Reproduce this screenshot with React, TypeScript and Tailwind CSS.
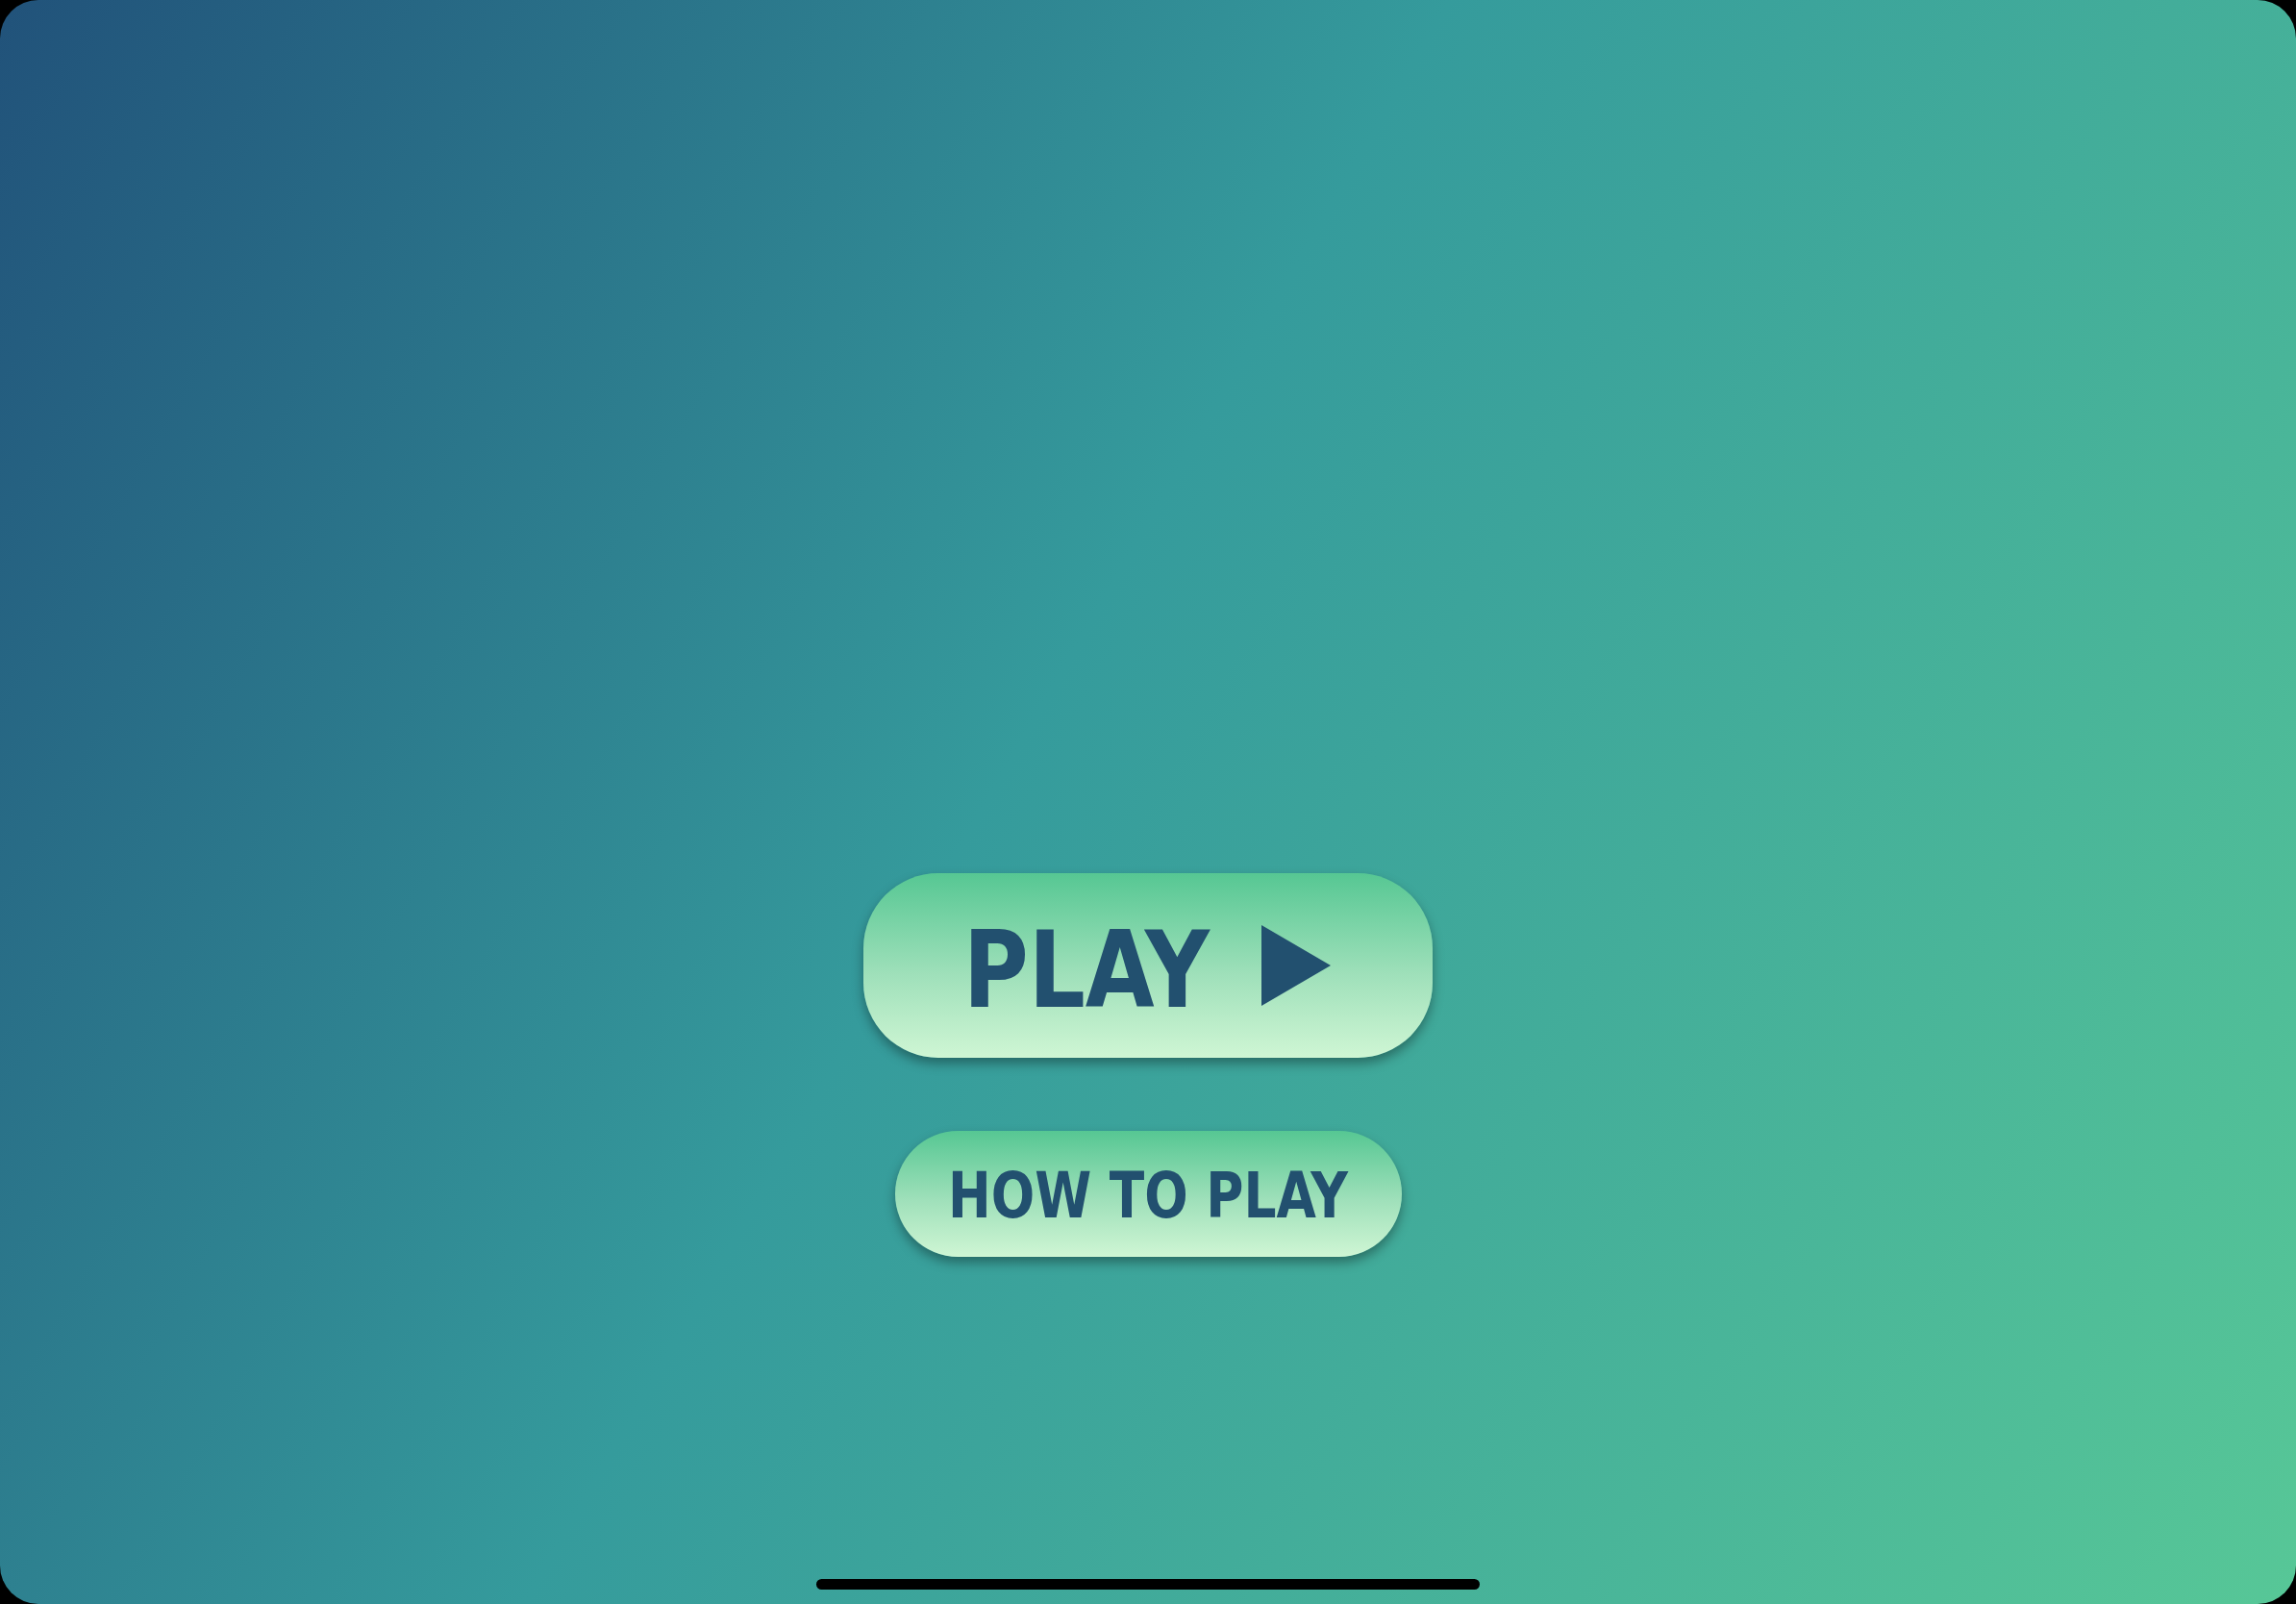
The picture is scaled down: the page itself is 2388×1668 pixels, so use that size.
import React from 'react';

function PlayIcon() {
  return (
    <svg width="72" height="84" viewBox="0 0 72 84" className="shrink-0">
      <polygon points="0,0 72,42 0,84" fill="#22506f" />
    </svg>
  );
}

export default function App() {
  return (
    <div className="w-[2388px] h-[1668px] bg-black overflow-hidden">
      <div className="w-full h-full rounded-[40px] flex flex-col items-center bg-[linear-gradient(120deg,#21527a_0%,#359b9c_45%,#57c797_100%)] font-['DejaVu_Sans_Condensed','DejaVu_Sans',sans-serif]">
        <button className="mt-[908px] w-[592px] h-[192px] rounded-[78px] flex items-center justify-center gap-[44px] pr-[12px] bg-[linear-gradient(180deg,#56c793_0%,#9fe0ba_55%,#cff6d4_100%)] shadow-[0_6px_12px_rgba(0,0,0,0.35)]">
          <span className="pt-[8px] text-[111px] leading-none font-bold text-[#22506f] scale-x-[0.93]">PLAY</span>
          <PlayIcon />
        </button>

        <button className="mt-[76px] w-[527px] h-[131px] rounded-full flex items-center justify-center bg-[linear-gradient(180deg,#56c793_0%,#9fe0ba_55%,#cff6d4_100%)] shadow-[0_6px_12px_rgba(0,0,0,0.35)]">
          <span className="pt-[4px] text-[66px] leading-none font-bold text-[#22506f] whitespace-nowrap scale-x-[0.9]">HOW TO PLAY</span>
        </button>

        <div className="mt-auto mb-[15px] w-[690px] h-[11px] rounded-full bg-black" />
      </div>
    </div>
  );
}
